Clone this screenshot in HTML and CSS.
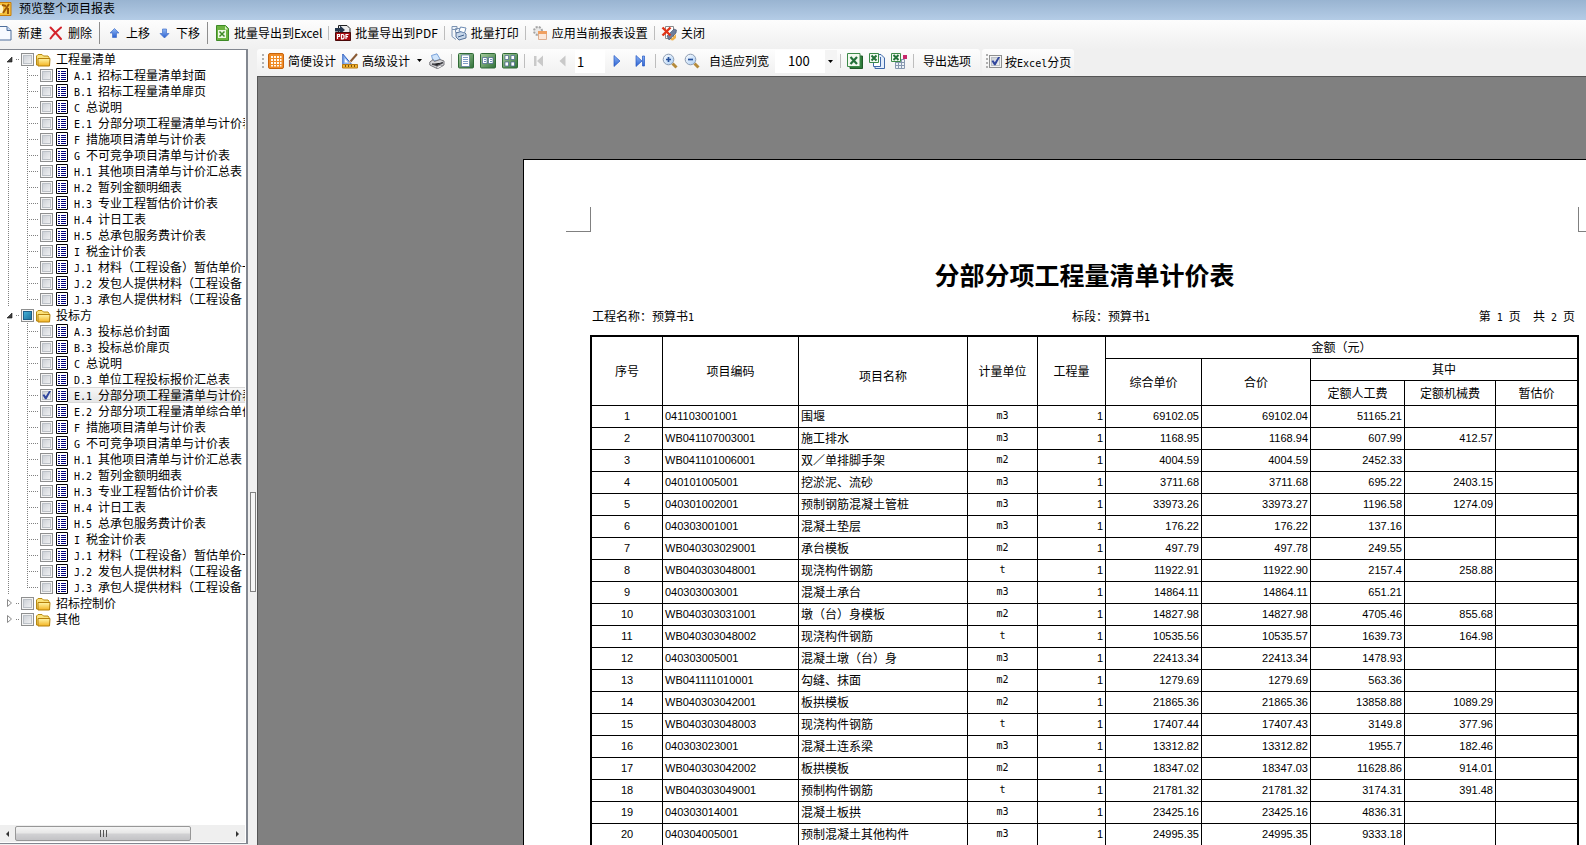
FILE: index.html
```html
<!DOCTYPE html>
<html lang="zh-CN">
<head>
<meta charset="utf-8">
<title>预览整个项目报表</title>
<link rel="stylesheet" href="styles.css">
</head>
<body>
<svg class="defs" aria-hidden="true">
  <defs>
    <linearGradient id="gold" x1="0" y1="0" x2="0" y2="1"><stop offset="0" stop-color="#fff6a8"/><stop offset="1" stop-color="#f3b322"/></linearGradient>
    <linearGradient id="green" x1="0" y1="0" x2="1" y2="1"><stop offset="0" stop-color="#a9cfa0"/><stop offset="1" stop-color="#2f7038"/></linearGradient>
    <linearGradient id="blue" x1="0" y1="0" x2="0" y2="1"><stop offset="0" stop-color="#8fb8f5"/><stop offset="1" stop-color="#2a5fd0"/></linearGradient>
    <linearGradient id="lens" x1="0" y1="0" x2="1" y2="1"><stop offset="0" stop-color="#ffffff"/><stop offset="1" stop-color="#a9cdf5"/></linearGradient>
  </defs>
  <symbol id="i-doc" viewBox="0 0 12 14"><path fill="#fff" stroke="#000" d="M.5.5h11v13H.5z"/><path stroke="#00007c" d="M2 3.500h2M5 3.500h5M2 5.500h2M5 5.500h5M2 7.500h2M5 7.500h5M2 9.500h2M5 9.500h5M2 11.500h2M5 11.500h5"/></symbol>
  <symbol id="i-folder" viewBox="0 0 16 14"><path fill="#fbe27a" stroke="#b98a10" d="M1.500 12V3l1.500-1.500h4L8.500 3H13l1 1.500V12z"/><path fill="url(#gold)" stroke="#b5800c" d="M3 5.500h12L14.500 13H3z"/></symbol>
  <symbol id="i-open" viewBox="0 0 8 8"><path fill="#404040" stroke="#111" stroke-width=".6" d="M7 2v5H2z"/></symbol>
  <symbol id="i-closed" viewBox="0 0 8 8"><path fill="#fff" stroke="#8a8a8a" d="M2.500.5v7L6.500 4z"/></symbol>
  <symbol id="i-new" viewBox="2 0 14 16"><path fill="#f7faff" stroke="#4f6f9c" d="M.5 1.500h8.500l4 4V15H.5z"/><path fill="#c5d8f2" stroke="#4f6f9c" d="M9 1.500v4h4"/></symbol>
  <symbol id="i-x" viewBox="0 0 16 16"><path fill="none" stroke="#d4232b" stroke-width="2" stroke-linecap="round" d="M2.500 2.500c3 3 7 7.500 10.500 11.500M13 2.500C9 6 5 10 2.500 13.500"/></symbol>
  <symbol id="i-up" viewBox="0 0 16 16"><path fill="url(#blue)" stroke="#4571c8" stroke-width=".7" d="M8.500 3.500 13 8h-2.500v4.500h-4V8H4z"/></symbol>
  <symbol id="i-down" viewBox="0 0 16 16"><path fill="url(#blue)" stroke="#4571c8" stroke-width=".7" d="M8.500 13 4 8.500h2.500V4h4v4.500H13z"/></symbol>
  <symbol id="i-xls" viewBox="0 0 16 16"><path fill="#6cb33f" stroke="#3d8a26" d="M2.500.5h9l3 3v12h-12z"/><path fill="#d9f0c8" d="M11 1v3.500h3z"/><path fill="#eef8e4" d="M4 5h8v8H4z"/><path stroke="#3d8a26" stroke-width="1.500" d="m5.500 6.500 5 5M10.500 6.500l-5 5"/></symbol>
  <symbol id="i-pdf" viewBox="0 0 16 16"><path fill="#ececec" stroke="#222" d="M3.500.5H12L15 3.500V8H3.500z"/><path fill="#24364c" d="M0 3h5V.5L10 5 5 9V6.500H0z"/><path fill="#a80d12" stroke="#4a0808" d="M.5 7.500h15v8H.5z"/><path fill="none" stroke="#fff" stroke-width="1.200" d="M2.500 14V9.500h2v2h-2M6.500 9.500h1.500l1 1V13l-1 .8H6.500zM11 14V9.500h2.500M11 11.700h2"/></symbol>
  <symbol id="i-prints" viewBox="0 0 16 16"><path fill="#eef4fb" stroke="#7c93b2" d="M1 1.500h5v3H1zM1 4.500v7l4 3M4.500 3.500h6v4h-6z"/><path fill="#c7d7ea" stroke="#587399" d="m5 8 7-2 3 3v4l-7 2-3-3z"/><path fill="#fff" stroke="#6d8bb3" d="m8 6 1.500-4L15 3l-1.500 5z"/><path stroke="#3c5c88" d="m7 12 6-2"/></symbol>
  <symbol id="i-apply" viewBox="0 0 16 16"><circle cx="6" cy="6" r="4" fill="#e8e8e8" stroke="#a4a4a4" stroke-width="2" stroke-dasharray="2 1.200"/><path fill="#fbe8da" stroke="#dcae90" d="M6.500 6.500h8v8h-8z"/><path fill="#f0a060" d="M6 6h9v3H6z"/></symbol>
  <symbol id="i-close" viewBox="0 0 16 16"><path fill="#fff" stroke="#8a8a8a" d="M4.500 1.500h8v12h-8z"/><path fill="#6d7d9b" stroke="#3f4c66" stroke-width=".6" d="m8 15-2-4 7-7 2.500 1L15 8z"/><path fill="#f0b04a" d="m9 15 6-6v4l-3 2.500z"/><path stroke="#e03418" stroke-width="2.400" d="m1.500 2.500 8 8M9.500 2.500l-8 8"/></symbol>
  <symbol id="i-grid" viewBox="0 0 16 16"><rect x=".5" y=".5" width="15" height="15" rx="1.500" fill="#f08a24" stroke="#c8640c"/><path fill="#fff8ec" d="M3 3h2v2H3zM6 3h2v2H6zM9 3h2v2H9zM12 3h1.500v2H12zM3 6h2v2H3zM6 6h2v2H6zM9 6h2v2H9zM12 6h1.500v2H12zM3 9h2v2H3zM6 9h2v2H6zM9 9h2v2H9zM12 9h1.500v2H12zM3 12h2v1.500H3zM6 12h2v1.500H6zM9 12h2v1.500H9zM12 12h1.500v1.500H12z"/></symbol>
  <symbol id="i-design" viewBox="0 0 16 16"><path fill="#8cb4f0" stroke="#2e5fc0" d="M.8 1v10.500h9z"/><path fill="#fff" d="M2.800 5.500v4h3.400z"/><path stroke="#8a5a34" stroke-width="2" d="M15 1 8.500 8.500"/><path stroke="#e9b98a" stroke-width="1.500" d="M8.500 8.500 7 10"/><path fill="#f2b434" stroke="#b87a10" d="M.5 11.500h15v3.500H.5z"/><path stroke="#7a5208" d="M3.500 12v2M6.500 12v2M9.500 12v2M12.500 12v2"/></symbol>
  <symbol id="i-printer" viewBox="0 0 16 16"><path fill="#cfe4fb" stroke="#5f8fd0" stroke-width=".8" d="m4 8-1.500-5.500L8 .8l3.500 6z"/><path fill="#d5d5d8" stroke="#77777c" d="m.8 9 3.500-2.500 1 2L11 6.500l4 1.500v4l-7 3.500L.8 12z"/><path stroke="#44444a" stroke-width="1.500" d="m3 11 5 1.500 6-3"/><path fill="#fff" stroke="#77777c" stroke-width=".7" d="m7 14 5-2 1.500 1L9 15.500z"/></symbol>
  <symbol id="i-p1" viewBox="0 0 16 16"><rect x=".5" y=".5" width="15" height="14.500" rx="1" fill="url(#green)" stroke="#2f6a36"/><path fill="#fff" stroke="#55739c" stroke-width=".7" d="M3.500 2h8v11.500h-8z"/><path stroke="#7f9dc8" d="M5 4.500h5M5 6.500h5M5 8.500h5M5 10.500h5"/></symbol>
  <symbol id="i-p2" viewBox="0 0 16 16"><rect x=".5" y=".5" width="15" height="14.500" rx="1" fill="url(#green)" stroke="#2f6a36"/><path fill="#fff" stroke="#44608f" stroke-width=".7" d="M2.500 4.500h4.500v6H2.500zM8.500 4.500H13v6H8.500z"/><path stroke="#6f8fc0" d="M4 6.500h2M4 8.500h2M10 6.500h2M10 8.500h2"/></symbol>
  <symbol id="i-p4" viewBox="0 0 16 16"><rect x=".5" y=".5" width="15" height="14.500" rx="1" fill="url(#green)" stroke="#2f6a36"/><path fill="#fff" stroke="#44608f" stroke-width=".7" d="M3 2.500h3.500v4H3zM9 2.500h3.500v4H9zM3 9h3.500v4H3zM9 9h3.500v4H9z"/></symbol>
  <symbol id="i-first" viewBox="0 0 16 16"><path fill="#c9c9c9" d="M3 3h2.500v10H3zM12 2.500v11L6 8z"/></symbol>
  <symbol id="i-prev" viewBox="0 0 16 16"><path fill="#c9c9c9" d="M11.500 2.500v11L5.500 8z"/></symbol>
  <symbol id="i-next" viewBox="0 0 16 16"><path fill="url(#blue)" stroke="#2457c4" stroke-width=".7" d="M5 2.500v11L11 8z"/></symbol>
  <symbol id="i-last" viewBox="0 0 16 16"><path fill="url(#blue)" stroke="#2457c4" stroke-width=".7" d="M4 2.500v11L10 8zM10.500 3h2v10h-2z"/></symbol>
  <symbol id="i-zin" viewBox="0 0 16 16"><path stroke="#b58a3a" stroke-width="3" d="m10.500 10.500 4 4"/><circle cx="6.500" cy="6.500" r="5.300" fill="url(#lens)" stroke="#8c9cb2"/><path stroke="#27509a" stroke-width="1.700" d="M4 6.500h5M6.500 4v5"/></symbol>
  <symbol id="i-zout" viewBox="0 0 16 16"><path stroke="#b58a3a" stroke-width="3" d="m10.500 10.500 4 4"/><circle cx="6.500" cy="6.500" r="5.300" fill="url(#lens)" stroke="#8c9cb2"/><path stroke="#27509a" stroke-width="1.700" d="M4 6.500h5"/></symbol>
  <symbol id="i-ex1" viewBox="0 0 16 16"><path fill="#2e7a3a" stroke="#1f5a28" d="M3 3h12.500v12.500H3z"/><path fill="#f3faf0" stroke="#3c8a48" d="M.5.5h12.500v13H.5z"/><path stroke="#24723a" stroke-width="2.200" d="m3.500 4 6.500 7M10 4l-6.500 7"/></symbol>
  <symbol id="i-ex2" viewBox="0 0 16 16"><path fill="#e3edfb" stroke="#3f68a8" d="M6 1.500h6l3.500 3.500v10.500H6z"/><path fill="#fff" stroke="#3f68a8" d="M4.500 7v6.500h7V4"/><path fill="#f3faf0" stroke="#3c8a48" d="M.5.5h9v9h-9z"/><path stroke="#24723a" stroke-width="2" d="m2.500 2.500 5 5M7.500 2.500l-5 5"/></symbol>
  <symbol id="i-ex3" viewBox="0 0 16 16"><path fill="#eef2f7" stroke="#8798b0" d="M4.500 6.500h9v9h-9zM7.500 6v9M10.500 6v9M4 9.500h9M4 12.500h9"/><path fill="#f3faf0" stroke="#3c8a48" d="M.5.5h9v8h-9z"/><path stroke="#24723a" stroke-width="2" d="m2.500 2 5 5M7.500 2l-5 5"/><path fill="#c8286c" d="M12 2h4v4h-4z"/></symbol>
  <symbol id="i-app" viewBox="4 0 12 16"><path fill="#f6c23c" stroke="#c77c0a" d="M-1 1.500h16v13H-1z"/><path fill="#fff3c0" d="M2 4h5v8H2z"/><path stroke="#9c5806" stroke-width="2" d="m13 3-6 9M12 7v6M6 4l4 1"/></symbol>
</svg>

<header class="titlebar"><svg class="app-icon"><use href="#i-app"/></svg><h1>预览整个项目报表</h1></header>

<nav class="toolbar" aria-label="报表工具栏">
  <button class="first"><svg class="ico ico-cut"><use href="#i-new"/></svg>新建</button>
  <button><svg class="ico"><use href="#i-x"/></svg>删除</button>
  <i class="sep tall"></i>
  <button><svg class="ico"><use href="#i-up"/></svg>上移</button>
  <button><svg class="ico"><use href="#i-down"/></svg>下移</button>
  <i class="sep tall"></i>
  <button><svg class="ico"><use href="#i-xls"/></svg>批量导出到Excel</button>
  <i class="sep"></i>
  <button><svg class="ico"><use href="#i-pdf"/></svg>批量导出到PDF</button>
  <i class="sep"></i>
  <button><svg class="ico"><use href="#i-prints"/></svg>批量打印</button>
  <i class="sep"></i>
  <button><svg class="ico"><use href="#i-apply"/></svg>应用当前报表设置</button>
  <i class="sep"></i>
  <button><svg class="ico"><use href="#i-close"/></svg>关闭</button>
</nav>

<main class="workspace">
  <aside class="side">
    <ul class="tree">
      <li class="root open"><button class="twist" aria-label="折叠"><svg><use href="#i-open"/></svg></button><input type="checkbox" id="r1"><svg class="folder"><use href="#i-folder"/></svg><label for="r1">工程量清单</label></li>
      <li><input type="checkbox" id="a1"><svg class="doc"><use href="#i-doc"/></svg><label for="a1"><b>A.1 </b>招标工程量清单封面</label></li>
      <li><input type="checkbox" id="a2"><svg class="doc"><use href="#i-doc"/></svg><label for="a2"><b>B.1 </b>招标工程量清单扉页</label></li>
      <li><input type="checkbox" id="a3"><svg class="doc"><use href="#i-doc"/></svg><label for="a3"><b>C </b>总说明</label></li>
      <li><input type="checkbox" id="a4"><svg class="doc"><use href="#i-doc"/></svg><label for="a4"><b>E.1 </b>分部分项工程量清单与计价表</label></li>
      <li><input type="checkbox" id="a5"><svg class="doc"><use href="#i-doc"/></svg><label for="a5"><b>F </b>措施项目清单与计价表</label></li>
      <li><input type="checkbox" id="a6"><svg class="doc"><use href="#i-doc"/></svg><label for="a6"><b>G </b>不可竞争项目清单与计价表</label></li>
      <li><input type="checkbox" id="a7"><svg class="doc"><use href="#i-doc"/></svg><label for="a7"><b>H.1 </b>其他项目清单与计价汇总表</label></li>
      <li><input type="checkbox" id="a8"><svg class="doc"><use href="#i-doc"/></svg><label for="a8"><b>H.2 </b>暂列金额明细表</label></li>
      <li><input type="checkbox" id="a9"><svg class="doc"><use href="#i-doc"/></svg><label for="a9"><b>H.3 </b>专业工程暂估价计价表</label></li>
      <li><input type="checkbox" id="a10"><svg class="doc"><use href="#i-doc"/></svg><label for="a10"><b>H.4 </b>计日工表</label></li>
      <li><input type="checkbox" id="a11"><svg class="doc"><use href="#i-doc"/></svg><label for="a11"><b>H.5 </b>总承包服务费计价表</label></li>
      <li><input type="checkbox" id="a12"><svg class="doc"><use href="#i-doc"/></svg><label for="a12"><b>I </b>税金计价表</label></li>
      <li><input type="checkbox" id="a13"><svg class="doc"><use href="#i-doc"/></svg><label for="a13"><b>J.1 </b>材料（工程设备）暂估单价一览表</label></li>
      <li><input type="checkbox" id="a14"><svg class="doc"><use href="#i-doc"/></svg><label for="a14"><b>J.2 </b>发包人提供材料（工程设备</label></li>
      <li class="last"><input type="checkbox" id="a15"><svg class="doc"><use href="#i-doc"/></svg><label for="a15"><b>J.3 </b>承包人提供材料（工程设备</label></li>
      <li class="root open"><button class="twist" aria-label="折叠"><svg><use href="#i-open"/></svg></button><input type="checkbox" id="r2" class="partial"><svg class="folder"><use href="#i-folder"/></svg><label for="r2">投标方</label></li>
      <li><input type="checkbox" id="b1"><svg class="doc"><use href="#i-doc"/></svg><label for="b1"><b>A.3 </b>投标总价封面</label></li>
      <li><input type="checkbox" id="b2"><svg class="doc"><use href="#i-doc"/></svg><label for="b2"><b>B.3 </b>投标总价扉页</label></li>
      <li><input type="checkbox" id="b3"><svg class="doc"><use href="#i-doc"/></svg><label for="b3"><b>C </b>总说明</label></li>
      <li><input type="checkbox" id="b4"><svg class="doc"><use href="#i-doc"/></svg><label for="b4"><b>D.3 </b>单位工程投标报价汇总表</label></li>
      <li class="selected"><input type="checkbox" id="b5" checked><svg class="doc"><use href="#i-doc"/></svg><label for="b5"><b>E.1 </b>分部分项工程量清单与计价表</label></li>
      <li><input type="checkbox" id="b6"><svg class="doc"><use href="#i-doc"/></svg><label for="b6"><b>E.2 </b>分部分项工程量清单综合单价</label></li>
      <li><input type="checkbox" id="b7"><svg class="doc"><use href="#i-doc"/></svg><label for="b7"><b>F </b>措施项目清单与计价表</label></li>
      <li><input type="checkbox" id="b8"><svg class="doc"><use href="#i-doc"/></svg><label for="b8"><b>G </b>不可竞争项目清单与计价表</label></li>
      <li><input type="checkbox" id="b9"><svg class="doc"><use href="#i-doc"/></svg><label for="b9"><b>H.1 </b>其他项目清单与计价汇总表</label></li>
      <li><input type="checkbox" id="b10"><svg class="doc"><use href="#i-doc"/></svg><label for="b10"><b>H.2 </b>暂列金额明细表</label></li>
      <li><input type="checkbox" id="b11"><svg class="doc"><use href="#i-doc"/></svg><label for="b11"><b>H.3 </b>专业工程暂估价计价表</label></li>
      <li><input type="checkbox" id="b12"><svg class="doc"><use href="#i-doc"/></svg><label for="b12"><b>H.4 </b>计日工表</label></li>
      <li><input type="checkbox" id="b13"><svg class="doc"><use href="#i-doc"/></svg><label for="b13"><b>H.5 </b>总承包服务费计价表</label></li>
      <li><input type="checkbox" id="b14"><svg class="doc"><use href="#i-doc"/></svg><label for="b14"><b>I </b>税金计价表</label></li>
      <li><input type="checkbox" id="b15"><svg class="doc"><use href="#i-doc"/></svg><label for="b15"><b>J.1 </b>材料（工程设备）暂估单价一览表</label></li>
      <li><input type="checkbox" id="b16"><svg class="doc"><use href="#i-doc"/></svg><label for="b16"><b>J.2 </b>发包人提供材料（工程设备</label></li>
      <li class="last"><input type="checkbox" id="b17"><svg class="doc"><use href="#i-doc"/></svg><label for="b17"><b>J.3 </b>承包人提供材料（工程设备</label></li>
      <li class="root"><button class="twist" aria-label="展开"><svg><use href="#i-closed"/></svg></button><input type="checkbox" id="r3"><svg class="folder"><use href="#i-folder"/></svg><label for="r3">招标控制价</label></li>
      <li class="root"><button class="twist" aria-label="展开"><svg><use href="#i-closed"/></svg></button><input type="checkbox" id="r4"><svg class="folder"><use href="#i-folder"/></svg><label for="r4">其他</label></li>
    </ul>
    <div class="hscroll">
      <button aria-label="向左"><svg viewBox="0 0 8 8"><path fill="#333" d="M5 1v6L2 4z"/></svg></button>
      <div class="track"><div class="thumb"><i></i><i></i><i></i></div></div>
      <button aria-label="向右"><svg viewBox="0 0 8 8"><path fill="#333" d="M2 1v6l3-3z"/></svg></button>
    </div>
  </aside>
  <div class="splitter"><span class="handle"></span></div>
  <section class="preview">
    <div class="viewbars">
      <div class="strip">
        <i class="grip"></i>
        <button><svg class="ico"><use href="#i-grid"/></svg>简便设计</button>
        <button><svg class="ico"><use href="#i-design"/></svg>高级设计<svg class="caret" viewBox="0 0 7 4"><path d="M1 0h5L3.500 3z"/></svg></button>
        <button aria-label="打印"><svg class="ico"><use href="#i-printer"/></svg></button>
        <i class="sep"></i>
        <button aria-label="单页"><svg class="ico"><use href="#i-p1"/></svg></button>
        <button aria-label="双页"><svg class="ico"><use href="#i-p2"/></svg></button>
        <button aria-label="四页"><svg class="ico"><use href="#i-p4"/></svg></button>
        <i class="sep"></i>
        <button aria-label="首页"><svg class="ico"><use href="#i-first"/></svg></button>
        <button class="nav" aria-label="上一页"><svg class="ico"><use href="#i-prev"/></svg></button>
        <input class="pageno" type="text" value="1" aria-label="页码">
        <button aria-label="下一页"><svg class="ico"><use href="#i-next"/></svg></button>
        <button class="nav" aria-label="末页"><svg class="ico"><use href="#i-last"/></svg></button>
        <i class="sep"></i>
        <button aria-label="放大"><svg class="ico"><use href="#i-zin"/></svg></button>
        <button aria-label="缩小"><svg class="ico"><use href="#i-zout"/></svg></button>
        <button class="text">自适应列宽</button>
        <span class="combo"><select aria-label="缩放比例"><option>100</option></select><svg class="caret" viewBox="0 0 7 4"><path d="M1 0h5L3.500 3z"/></svg></span>
        <i class="sep"></i>
        <button aria-label="导出Excel"><svg class="ico"><use href="#i-ex1"/></svg></button>
        <button aria-label="导出多表"><svg class="ico"><use href="#i-ex2"/></svg></button>
        <button aria-label="导出表格"><svg class="ico"><use href="#i-ex3"/></svg></button>
        <i class="sep"></i>
        <button class="text">导出选项</button>
      </div>
      <div class="strip small">
        <i class="grip"></i>
        <input type="checkbox" id="paging" checked><label for="paging">按<b>Excel</b>分页</label>
      </div>
    </div>
    <div class="canvas">
      <article class="paper">
        <div class="marks"><i class="mark left"></i><i class="mark right"></i></div>
        <div class="body">
          <h2>分部分项工程量清单计价表</h2>
          <div class="meta"><span>工程名称：预算书<b>1</b></span><span>标段：预算书<b>1</b></span><span>第<b> 1 </b>页<b>  </b>共<b> 2 </b>页</span></div>
          <table>
            <colgroup><col class="c1"><col class="c2"><col class="c3"><col class="c4"><col class="c5"><col class="c6"><col class="c7"><col class="c8"><col class="c9"><col class="c10"></colgroup>
            <thead>
              <tr><th rowspan="3">序号</th><th rowspan="3">项目编码</th><th rowspan="3" class="low">项目名称</th><th rowspan="3">计量单位</th><th rowspan="3">工程量</th><th colspan="5">金额（元）</th></tr>
              <tr><th rowspan="2">综合单价</th><th rowspan="2">合价</th><th colspan="3">其中</th></tr>
              <tr class="deep"><th>定额人工费</th><th>定额机械费</th><th>暂估价</th></tr>
            </thead>
            <tbody>
              <tr><td>1</td><td>041103001001</td><td>围堰</td><td>m3</td><td>1</td><td>69102.05</td><td>69102.04</td><td>51165.21</td><td></td><td></td></tr>
              <tr><td>2</td><td>WB041107003001</td><td>施工排水</td><td>m3</td><td>1</td><td>1168.95</td><td>1168.94</td><td>607.99</td><td>412.57</td><td></td></tr>
              <tr><td>3</td><td>WB041101006001</td><td>双／单排脚手架</td><td>m2</td><td>1</td><td>4004.59</td><td>4004.59</td><td>2452.33</td><td></td><td></td></tr>
              <tr><td>4</td><td>040101005001</td><td>挖淤泥、流砂</td><td>m3</td><td>1</td><td>3711.68</td><td>3711.68</td><td>695.22</td><td>2403.15</td><td></td></tr>
              <tr><td>5</td><td>040301002001</td><td>预制钢筋混凝土管桩</td><td>m3</td><td>1</td><td>33973.26</td><td>33973.27</td><td>1196.58</td><td>1274.09</td><td></td></tr>
              <tr><td>6</td><td>040303001001</td><td>混凝土垫层</td><td>m3</td><td>1</td><td>176.22</td><td>176.22</td><td>137.16</td><td></td><td></td></tr>
              <tr><td>7</td><td>WB040303029001</td><td>承台模板</td><td>m2</td><td>1</td><td>497.79</td><td>497.78</td><td>249.55</td><td></td><td></td></tr>
              <tr><td>8</td><td>WB040303048001</td><td>现浇构件钢筋</td><td>t</td><td>1</td><td>11922.91</td><td>11922.90</td><td>2157.4</td><td>258.88</td><td></td></tr>
              <tr><td>9</td><td>040303003001</td><td>混凝土承台</td><td>m3</td><td>1</td><td>14864.11</td><td>14864.11</td><td>651.21</td><td></td><td></td></tr>
              <tr><td>10</td><td>WB040303031001</td><td>墩（台）身模板</td><td>m2</td><td>1</td><td>14827.98</td><td>14827.98</td><td>4705.46</td><td>855.68</td><td></td></tr>
              <tr><td>11</td><td>WB040303048002</td><td>现浇构件钢筋</td><td>t</td><td>1</td><td>10535.56</td><td>10535.57</td><td>1639.73</td><td>164.98</td><td></td></tr>
              <tr><td>12</td><td>040303005001</td><td>混凝土墩（台）身</td><td>m3</td><td>1</td><td>22413.34</td><td>22413.34</td><td>1478.93</td><td></td><td></td></tr>
              <tr><td>13</td><td>WB041111010001</td><td>勾缝、抹面</td><td>m2</td><td>1</td><td>1279.69</td><td>1279.69</td><td>563.36</td><td></td><td></td></tr>
              <tr><td>14</td><td>WB040303042001</td><td>板拱模板</td><td>m2</td><td>1</td><td>21865.36</td><td>21865.36</td><td>13858.88</td><td>1089.29</td><td></td></tr>
              <tr><td>15</td><td>WB040303048003</td><td>现浇构件钢筋</td><td>t</td><td>1</td><td>17407.44</td><td>17407.43</td><td>3149.8</td><td>377.96</td><td></td></tr>
              <tr><td>16</td><td>040303023001</td><td>混凝土连系梁</td><td>m3</td><td>1</td><td>13312.82</td><td>13312.82</td><td>1955.7</td><td>182.46</td><td></td></tr>
              <tr><td>17</td><td>WB040303042002</td><td>板拱模板</td><td>m2</td><td>1</td><td>18347.02</td><td>18347.03</td><td>11628.86</td><td>914.01</td><td></td></tr>
              <tr><td>18</td><td>WB040303049001</td><td>预制构件钢筋</td><td>t</td><td>1</td><td>21781.32</td><td>21781.32</td><td>3174.31</td><td>391.48</td><td></td></tr>
              <tr><td>19</td><td>040303014001</td><td>混凝土板拱</td><td>m3</td><td>1</td><td>23425.16</td><td>23425.16</td><td>4836.31</td><td></td><td></td></tr>
              <tr><td>20</td><td>040304005001</td><td>预制混凝土其他构件</td><td>m3</td><td>1</td><td>24995.35</td><td>24995.35</td><td>9333.18</td><td></td><td></td></tr>
            </tbody>
          </table>
        </div>
      </article>
    </div>
  </section>
</main>
</body>
</html>
```

FILE: styles.css
```css
* { box-sizing: border-box; }
html, body { height: 100%; }
body {
  margin: 0;
  display: flex;
  flex-direction: column;
  overflow: hidden;
  background: #f0f0f0;
  color: #000;
  font: 12px/16px "Noto Sans CJK SC", sans-serif;
}
.defs { position: absolute; width: 0; height: 0; }
svg { flex: none; }
button {
  display: flex;
  align-items: center;
  gap: 4px;
  margin: 0;
  padding: 0;
  border: 0;
  background: none;
  color: inherit;
  font: inherit;
  white-space: nowrap;
}
b { font: 10px/12px "DejaVu Sans Mono", monospace; white-space: pre; }

.titlebar {
  flex: none;
  height: 20px;
  display: flex;
  align-items: center;
  gap: 7px;
  padding-bottom: 2px;
  background: linear-gradient(#99b4d1, #b4cce6);
}
.titlebar h1 { margin: 0; padding-bottom: 2px; font-size: 12px; line-height: 16px; font-weight: 400; }
.app-icon { width: 12px; height: 16px; }

.toolbar {
  flex: none;
  height: 29px;
  display: flex;
  align-items: center;
  padding-bottom: 3px;
  background: linear-gradient(#fdfdfd, #f0f0f0);
}
.toolbar button, .strip button { margin: 0 3px; }
.toolbar .first { margin-left: 0; }
.ico { width: 16px; height: 16px; }
.ico-cut { width: 14px; }
.sep { flex: none; width: 1px; height: 14px; margin: 0 3px; background: #bdbdbd; }
.sep.tall { height: 22px; margin-left: 4px; background: #8e8e8e; }
.caret { width: 7px; height: 4px; }
.strip button .caret { margin-left: 2px; }

.workspace { flex: 1; min-height: 0; display: flex; }
.side {
  flex: none;
  width: 248px;
  display: flex;
  flex-direction: column;
  margin-bottom: 1px;
  padding-right: 1px;
  border: solid #828790;
  border-width: 1px 2px 1px 0;
  background: #fff;
}
.tree { flex: 1; min-height: 0; margin: 0; padding: 1px 0 0; list-style: none; overflow: hidden; }
.tree li {
  height: 16px;
  display: flex;
  align-items: center;
  padding-left: 40px;
  background:
    repeating-linear-gradient(#808080 0 1px, transparent 1px 2px) 8px 0 / 1px 100% no-repeat,
    repeating-linear-gradient(#808080 0 1px, transparent 1px 2px) 27px 0 / 1px 100% no-repeat,
    repeating-linear-gradient(90deg, #808080 0 1px, transparent 1px 2px) 27px 8px / 11px 1px no-repeat;
}
.tree li.last { background-size: 1px 100%, 1px 50%, 11px 1px; }
.tree li.root {
  padding-left: 5px;
  background: repeating-linear-gradient(90deg, #808080 0 1px, transparent 1px 2px) 16px 8px / 4px 1px no-repeat;
}
.tree label { flex: 1; white-space: nowrap; overflow: hidden; }
.twist { margin-right: 8px; }
.twist svg { width: 8px; height: 8px; }
.doc { width: 12px; height: 14px; margin: 0 6px 0 3px; }
.folder { width: 16px; height: 14px; margin: 2px 5px 0 1px; }
.selected label { box-shadow: inset 0 1px #d9d9d9, inset 0 -1px #d9d9d9; background: linear-gradient(#f8f8f8, #e5e5e5); }
.selected .doc { margin-right: 0; }
.selected label { padding-left: 6px; }

input[type="checkbox"] {
  appearance: none;
  flex: none;
  position: relative;
  width: 13px;
  height: 13px;
  margin: 0;
  border: 1px solid #8e8f8f;
  background: linear-gradient(135deg, #c4c9d0, #f8f8f8);
  box-shadow: inset 0 0 0 1px #f4f4f4, inset 0 0 0 2px #bcc1c7;
}
input[type="checkbox"]:checked::after {
  content: "";
  position: absolute;
  inset: 1px;
  background: #31479e;
  clip-path: polygon(5% 50%, 25% 42%, 42% 65%, 78% 5%, 100% 5%, 50% 98%, 34% 98%);
}
input.partial { background: linear-gradient(135deg, #4fc0e6, #12638f); box-shadow: inset 0 0 0 1px #f4f4f4, inset 0 0 0 2px #1c5f8a; }

.hscroll { flex: none; height: 17px; display: flex; margin-bottom: 1px; background: #efefef; }
.hscroll button { width: 15px; justify-content: center; }
.hscroll svg { width: 8px; height: 8px; }
.track { flex: 1; display: flex; padding: 1px 0; }
.thumb {
  width: 82%;
  display: flex;
  align-items: center;
  justify-content: center;
  gap: 2px;
  border: 1px solid #979797;
  border-radius: 2px;
  background: linear-gradient(#f5f5f5, #e6e6e6 48%, #d2d2d4 52%, #c3c3c6);
}
.thumb i { width: 1px; height: 7px; background: #555; }

.splitter { flex: none; width: 9px; display: flex; flex-direction: column; align-items: center; justify-content: center; padding-top: 190px; }
.handle { width: 6px; height: 100px; border: 1px solid #808080; background: #f5f5f5; }

.preview { flex: 1; min-width: 0; display: flex; flex-direction: column; }
.viewbars { flex: none; height: 27px; display: flex; gap: 2px; }
.strip {
  display: flex;
  align-items: center;
  padding: 0 3px 3px 5px;
  border-radius: 3px;
  background: linear-gradient(#fdfdfd, #f0f0f0);
}
.strip .nav { margin: 0 4px; }
.strip .text { margin: 0 6px; }
.strip.small { padding-left: 4px; }
.strip.small label { padding: 1px 0 0 3px; }
.grip { width: 2px; height: 14px; margin-right: 1px; background: repeating-linear-gradient(#b0b0b0 0 2px, transparent 2px 4px); }
.pageno { width: 30px; height: 23px; margin: 0 1px; padding: 0 2px; border: 0; background: #fff; font: 13px/20px "Noto Sans CJK SC", sans-serif; }
.combo { position: relative; display: flex; }
.combo select { appearance: none; width: 62px; height: 23px; padding: 0 13px; border: 0; border-radius: 0; background: linear-gradient(90deg, #fff 50px, #f4f4f4 50px); color: #000; font: 13px/20px "Noto Sans CJK SC", sans-serif; }
.combo .caret { position: absolute; right: 3px; top: 10px; pointer-events: none; }

.canvas { flex: 1; min-height: 0; overflow: hidden; padding: 82px 0 0 265px; border: solid #555; border-width: 1px 0 0 1px; background: #808080; }
.paper { width: 1123px; min-height: 794px; padding-top: 47px; border: 1px solid #000; background: #fff; }
.marks { display: flex; justify-content: space-between; padding: 0 42px; }
.mark { width: 25px; height: 25px; border-bottom: 1px solid #808080; }
.mark.left { border-right: 1px solid #808080; }
.mark.right { border-left: 1px solid #808080; }
.body { padding: 22px 66px; }
h2 { margin: 0; font-size: 25px; line-height: 40px; font-weight: 700; text-align: center; }
.meta { display: grid; grid-template-columns: 480px 1fr auto; padding: 14px 4px 11px 2px; }
table { table-layout: fixed; width: 989px; border: 2px solid #000; border-collapse: separate; border-spacing: 0; }
.c1 { width: 71px; }
.c2 { width: 136px; }
.c3 { width: 169px; }
.c4 { width: 70px; }
.c5 { width: 68px; }
.c6 { width: 96px; }
.c7 { width: 109px; }
.c8 { width: 94px; }
.c9 { width: 91px; }
.c10 { width: 81px; }
tr { height: 22px; }
tr.deep { height: 25px; }
th, td { padding: 0 2px 1px; border: solid #000; border-width: 0 1px 1px 0; line-height: 16px; white-space: nowrap; }
th { font-weight: 400; }
th.low { padding-top: 10px; }
thead tr:first-child th:last-child, tr:nth-child(n+2) th:last-child, td:last-child { border-right: 0; }
td { font-family: "Liberation Sans", sans-serif; font-size: 11px; text-align: right; }
td:nth-child(1) { text-align: center; }
td:nth-child(2) { text-align: left; }
td:nth-child(3) { text-align: left; font: 12px/16px "Noto Sans CJK SC", sans-serif; }
td:nth-child(4) { text-align: center; font: 10px/16px "DejaVu Sans Mono", monospace; }
```
